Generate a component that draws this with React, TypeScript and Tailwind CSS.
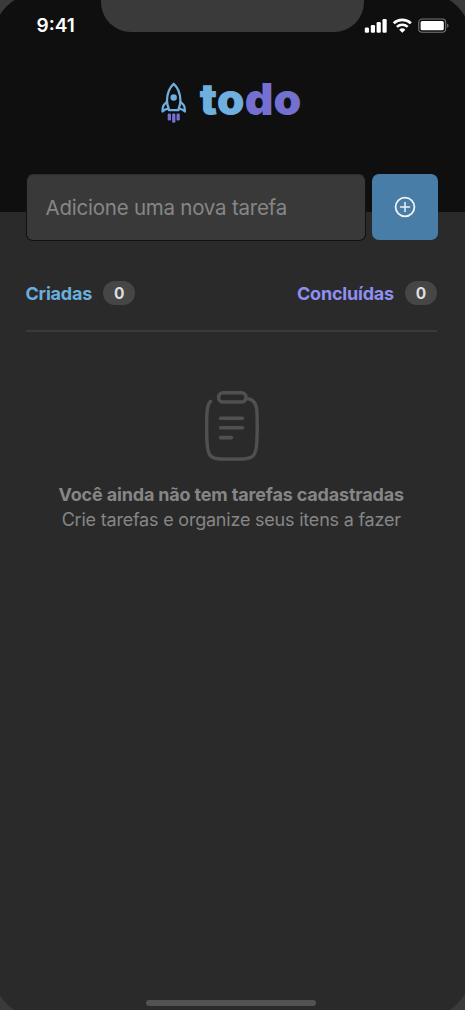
import React, { useState } from "react";

interface CounterProps {
  label: string;
  count: number;
  labelClass: string;
}

const StatusBar: React.FC = () => (
  <div className="relative h-[52px] flex items-start justify-between pl-[36.5px] pr-[16px]">
    <div className="absolute left-[100.5px] top-0 w-[263px] h-[32px] bg-[#3a3a3a] rounded-b-[30px]" />
    <span className="mt-[14px] text-[19px] leading-[24px] font-semibold text-white">
      9:41
    </span>
    <svg className="mt-[17px]" width="85" height="17" viewBox="0 0 85 17" fill="none">
      <rect x="0.8" y="10.5" width="4.2" height="5.3" rx="1.2" fill="#fff" />
      <rect x="6.8" y="8" width="4.2" height="7.8" rx="1.2" fill="#fff" />
      <rect x="12.6" y="5" width="4.2" height="10.8" rx="1.2" fill="#fff" />
      <rect x="18.5" y="2" width="4.2" height="13.8" rx="1.2" fill="#fff" />
      <path
        d="M29.7 6.3a12.6 12.6 0 0 1 17.2 0M32.9 9.9a8 8 0 0 1 10.8 0"
        stroke="#fff"
        strokeWidth="2.6"
      />
      <path d="M38.3 15.8l-3.1-3.1a4.5 4.5 0 0 1 6.2 0z" fill="#fff" />
      <rect x="54.7" y="2" width="27" height="13.2" rx="3.5" stroke="#777" strokeWidth="1.1" />
      <rect x="56.6" y="3.9" width="23.2" height="9.4" rx="1.6" fill="#fff" />
      <path d="M83.2 6.4c1.8.7 1.8 3.7 0 4.4z" fill="#777" />
    </svg>
  </div>
);

const Rocket: React.FC = () => (
  <svg width="26" height="42" viewBox="0 0 26 42" fill="none">
    <path
      d="M12.7 1.8C8.8 5.2 6.1 11.8 6 18.5c0 3 .5 5.4 1.7 8l.3 1.700h9.400l.3-1.700c1.200-2.600 1.700-5 1.700-8C19.300 11.800 16.600 5.200 12.700 1.800z"
      stroke="#6fafdf"
      strokeWidth="2.3"
      strokeLinejoin="round"
    />
    <path
      d="M6.200 19.500L3 22.800Q1.500 24.500 1.500 29.600Q3.800 26.900 7.600 26.700M19.200 19.500l3.200 3.300q1.500 1.700 1.500 6.800q-2.300-2.700-6.100-2.900"
      stroke="#6fafdf"
      strokeWidth="2.2"
      strokeLinejoin="round"
    />
    <circle cx="12.7" cy="15.5" r="3.2" fill="#6fafdf" />
    <rect x="6.7" y="31.5" width="3.3" height="7" rx="1.2" fill="#7370d0" />
    <rect x="11.1" y="31.5" width="3.3" height="9.3" rx="1.2" fill="#7370d0" />
    <rect x="15.5" y="31.5" width="3.3" height="7" rx="1.2" fill="#7370d0" />
  </svg>
);

const Clipboard: React.FC = () => (
  <svg width="53" height="72" viewBox="0 0 53 72" className="overflow-visible" fill="none" stroke="#505050" strokeLinecap="round">
    <rect x="13.6" y="2.8" width="27.4" height="9.2" rx="4.6" strokeWidth="3.6" />
    <path
      d="M41 8.5c7.5.2 10.700 5.500 11 14 .3 9 .4 20-.2 29.500-.7 13.500-3.400 16.700-14 17-7.300.2-14.500.2-21.800 0C5.800 68.700 2.800 66 2.100 53c-.6-9.500-.5-20.500-.2-29 .2-6.500 1.200-9.800 3.600-12.600"
      strokeWidth="3.4"
    />
    <path d="M15.500 28.300h22M15.500 37.800h22M15.500 47.600h11" strokeWidth="3.6" />
  </svg>
);

const Counter: React.FC<CounterProps> = ({ label, count, labelClass }) => (
  <div className="flex items-center gap-[11px]">
    <span className={`pt-px text-[18px] leading-[25px] font-bold ${labelClass}`}>{label}</span>
    <span className="w-8 h-6 rounded-full bg-[#464646] text-[#dedede] text-[15.5px] leading-[25px] font-bold text-center">
      {count}
    </span>
  </div>
);

const App: React.FC = () => {
  const [task, setTask] = useState("");

  return (
    <div className="w-[465px] h-[1010px] overflow-hidden bg-[#3a3a3a] font-['Inter','Liberation_Sans',sans-serif]">
      <div className="-ml-[7px] -mt-[7px] w-[478px] h-[1024px] rounded-[46px] overflow-hidden bg-[#2a2a2a] p-[7px] pr-[6px] bg-[linear-gradient(#0f0f0f,#0f0f0f)] bg-no-repeat bg-[length:100%_219px]">
        <div className="h-full flex flex-col">
          <StatusBar />

          <header className="h-[123px] flex items-start pl-[161px] pt-[30px] gap-[12.5px]">
            <Rocket />
            <h1 className="-mt-[7px] text-[44.5px] leading-[48px] font-black text-[#6fafdf]">
              to<span className="text-[#7370d0]">do</span>
            </h1>
          </header>

          <form
            className="flex items-start gap-[5.5px] pl-[26px]"
            onSubmit={(e) => e.preventDefault()}
          >
            <input
              type="text"
              value={task}
              onChange={(e) => setTask(e.target.value)}
              placeholder="Adicione uma nova tarefa"
              className="-mt-px w-[340px] h-[67px] rounded-[7px] bg-[#393939] border border-[#111] border-t-[#2c2c2c] pl-[18.5px] text-[20.5px] tracking-[-0.23px] text-white placeholder:text-[#868686] outline-none"
            />
            <button
              type="submit"
              aria-label="Adicionar"
              className="-mt-px w-[66px] h-[66px] rounded-[7px] bg-[#477da7] flex items-center justify-center"
            >
              <svg width="22" height="22" viewBox="0 0 22 22" fill="none" stroke="#f2f2f2" strokeLinecap="round">
                <circle cx="11" cy="11" r="9.4" strokeWidth="1.8" />
                <path d="M11 6.5v9M6.5 11h9" strokeWidth="1.5" />
              </svg>
            </button>
          </form>

          <main className="flex-1 pl-[25.5px] pr-[28px] pt-[39px]">
            <div className="flex justify-between pb-[24px] border-b-2 border-[#3a3a3a] tracking-[-0.2px]">
              <Counter label="Criadas" count={0} labelClass="text-[#6aaede]" />
              <Counter label="Concluídas" count={0} labelClass="text-[#8f8ef2]" />
            </div>

            <div className="flex flex-col items-center pt-[58px] text-[18px] leading-[25px] text-[#868686] whitespace-nowrap">
              <Clipboard />
              <p className="mt-[20px] font-bold tracking-[-0.17px]">
                Você ainda não tem tarefas cadastradas
              </p>
              <p className="tracking-[-0.21px]">Crie tarefas e organize seus itens a fazer</p>
            </div>
          </main>

          <div className="w-[170px] h-[6px] ml-[146px] mb-[4px] rounded-full bg-[#525252]" />
        </div>
      </div>
    </div>
  );
};

export default App;
